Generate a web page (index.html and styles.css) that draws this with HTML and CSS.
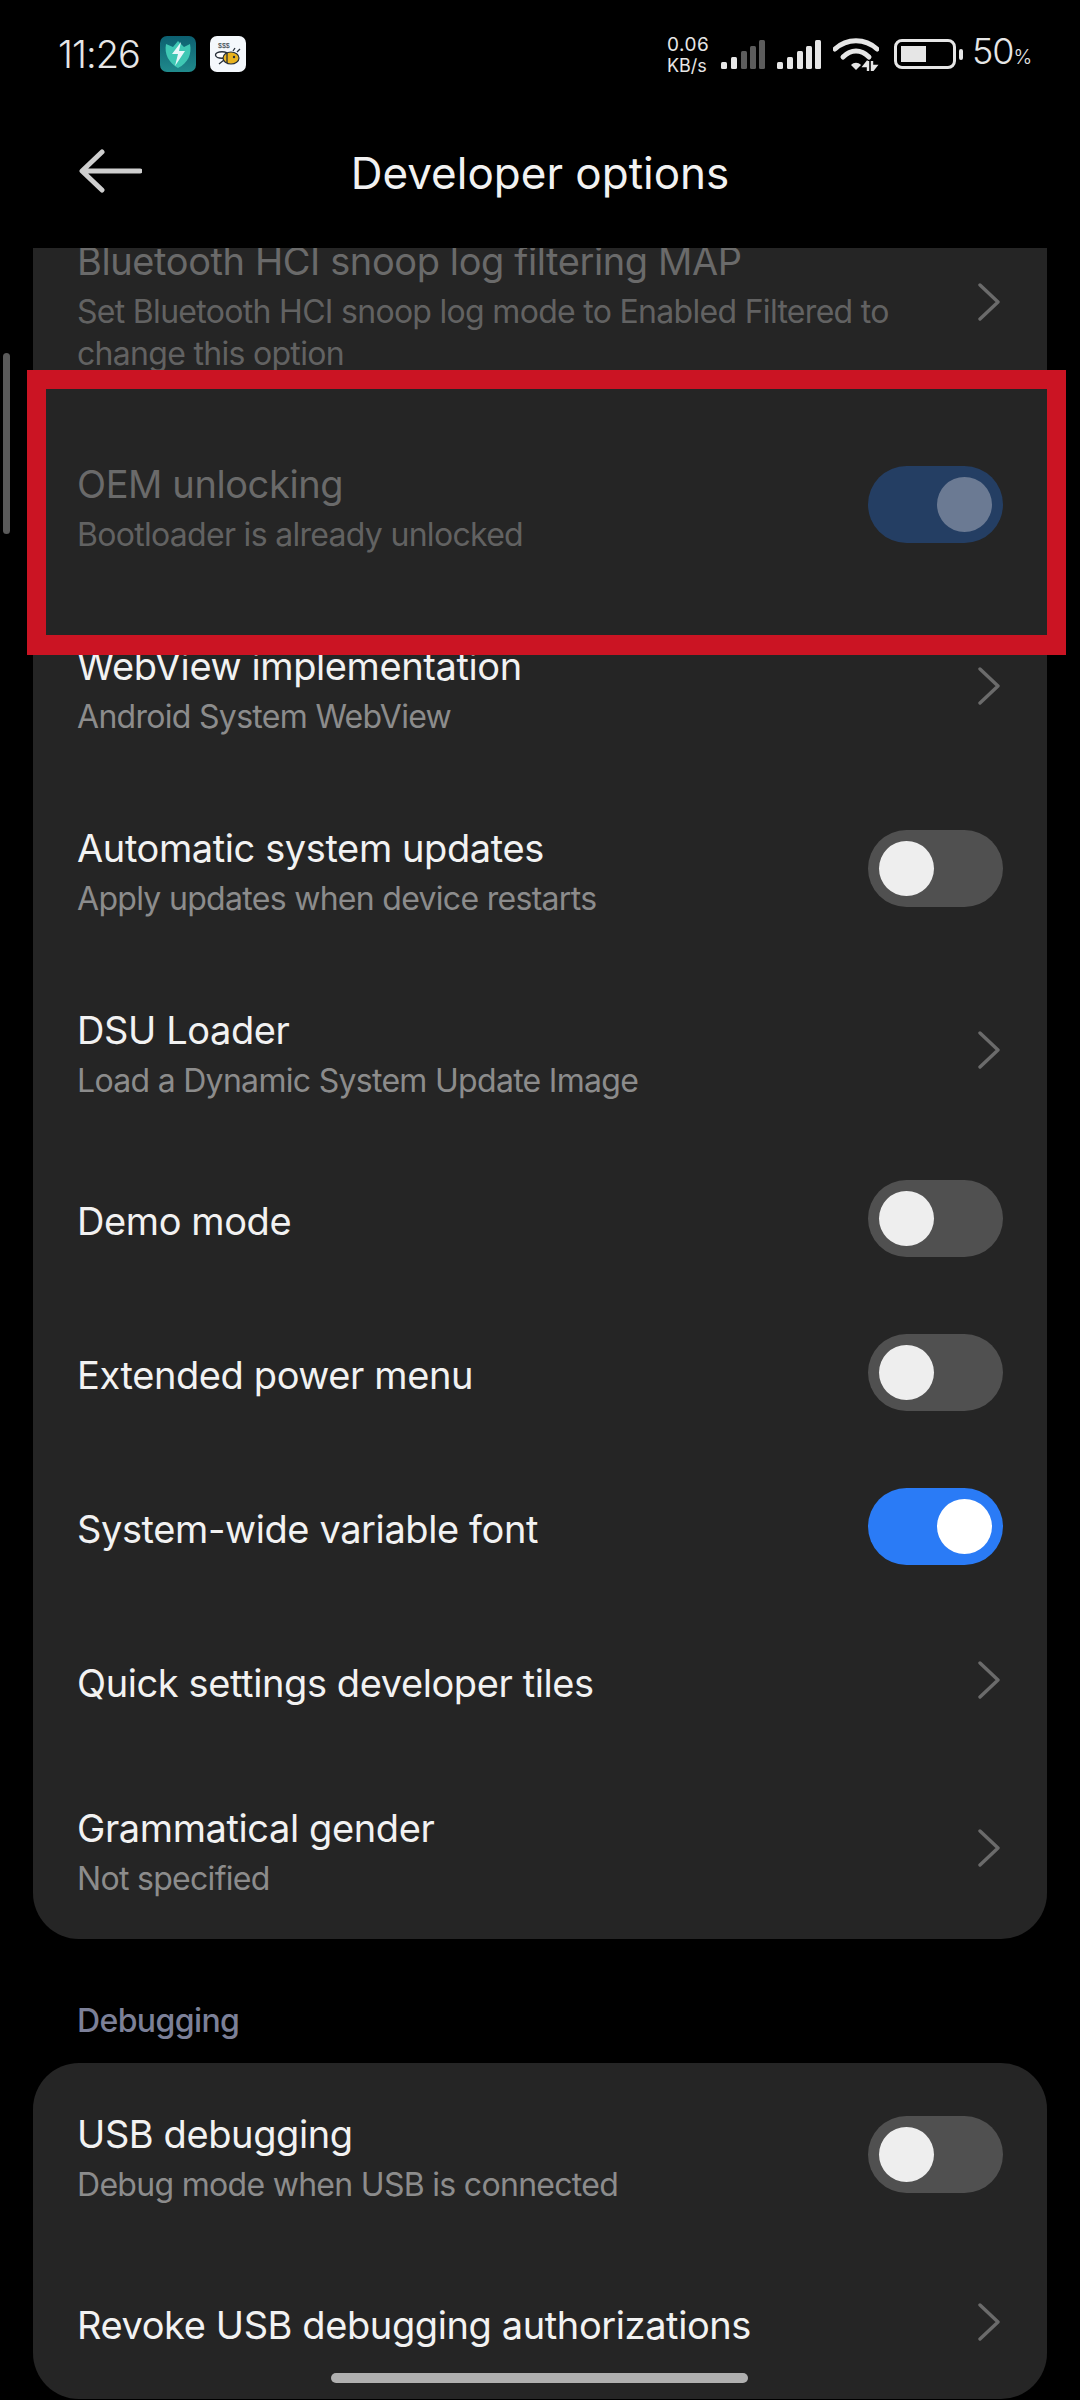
FILE: index.html
```html
<!DOCTYPE html>
<html lang="en">
<head>
    <meta charset="UTF-8">
    <title>Developer options</title>
    <link rel="stylesheet" href="styles.css">
</head>
<body>
    <div class="phone">
        <div class="status-bar">
            <div class="status-left">
                <span class="clock">11:26</span>
                <svg class="app-icon" viewBox="0 0 36 36" width="36" height="36">
                    <defs>
                        <linearGradient id="tealBg" x1="0" y1="0" x2="0" y2="1">
                            <stop offset="0" stop-color="#0c5f70"/>
                            <stop offset="1" stop-color="#208a8c"/>
                        </linearGradient>
                    </defs>
                    <rect width="36" height="36" rx="7" fill="url(#tealBg)"/>
                    <path d="M6 8 L13 11 L18 5 L24 11 L30 8 C32 18 28 27 18 32 C9 27 4 18 6 8 Z" fill="#3fc7b4"/>
                    <path d="M21 6 L12 18 L18 18 L15 30 L25 15 L19 15 Z" fill="#e8f7fa"/>
                </svg>
                <svg class="app-icon" viewBox="0 0 36 36" width="36" height="36">
                    <rect width="36" height="36" rx="7" fill="#f4f8fc"/>
                    <ellipse cx="12" cy="19" rx="6.5" ry="3.2" fill="#fff" stroke="#27303a" stroke-width="1.4"/>
                    <ellipse cx="21" cy="22" rx="8" ry="6" fill="#e9b31d" stroke="#27303a" stroke-width="1.2"/>
                    <circle cx="24" cy="21" r="1.2" fill="#27303a"/>
                    <path d="M17 17 L17 27 M9 28 L14 24 M23 15 L25 12 M27 16 L30 13" stroke="#27303a" stroke-width="1.3" fill="none"/>
                    <text x="8" y="12" class="bee-money">$$$</text>
                </svg>
            </div>
            <div class="status-right">
                <div class="net-speed"><span class="net-value">0.06</span><span>KB/s</span></div>
                <svg class="signal" viewBox="0 0 44 29" width="44" height="29">
                    <rect x="0" y="22" width="6" height="7" rx="1.5" fill="#e6e6e6"/>
                    <rect x="10" y="17" width="6" height="12" rx="1.5" fill="#e6e6e6"/>
                    <rect x="20" y="11" width="6" height="18" rx="1.5" fill="#5c5c5c"/>
                    <rect x="29" y="6" width="6" height="23" rx="1.5" fill="#5c5c5c"/>
                    <rect x="38" y="0" width="6" height="29" rx="1.5" fill="#5c5c5c"/>
                </svg>
                <svg class="signal" viewBox="0 0 44 29" width="44" height="29">
                    <rect x="0" y="22" width="6" height="7" rx="1.5" fill="#e6e6e6"/>
                    <rect x="10" y="17" width="6" height="12" rx="1.5" fill="#e6e6e6"/>
                    <rect x="20" y="11" width="6" height="18" rx="1.5" fill="#e6e6e6"/>
                    <rect x="29" y="6" width="6" height="23" rx="1.5" fill="#e6e6e6"/>
                    <rect x="38" y="0" width="6" height="29" rx="1.5" fill="#e6e6e6"/>
                </svg>
                <svg class="wifi" viewBox="0 0 46 34" width="46" height="34">
                    <path d="M2 12 C14 1 32 1 44 12" fill="none" stroke="#e6e6e6" stroke-width="5" stroke-linecap="round"/>
                    <path d="M10 20 C18 12 28 12 36 20" fill="none" stroke="#e6e6e6" stroke-width="5" stroke-linecap="round"/>
                    <path d="M18 28 L23 33 L28 28 C25 25 21 25 18 28 Z" fill="#e6e6e6"/>
                    <path d="M35 24 L35 34 M35 24 L31 29 L35 29 M39 34 L39 24 M39 34 L43 29 L39 29" fill="none" stroke="#e6e6e6" stroke-width="2.4"/>
                </svg>
                <div class="battery">
                    <div class="battery-body"><div class="battery-fill"></div></div>
                    <div class="battery-nub"></div>
                </div>
                <div class="battery-text">50<small>%</small></div>
            </div>
        </div>

        <header class="title-bar">
            <svg class="back" viewBox="0 0 64 44" width="64" height="44">
                <path d="M62 22 H5 M24 3 L4 22 L24 41" fill="none" stroke="#cfcfcf" stroke-width="5" stroke-linecap="round" stroke-linejoin="round"/>
            </svg>
            <h1>Developer options</h1>
        </header>

        <main class="scroller">
            <section class="card card-scrolled">
                <div class="row row-tall disabled">
                    <div class="row-text">
                        <div class="row-title">Bluetooth HCI snoop log filtering MAP</div>
                        <div class="row-sub">Set Bluetooth HCI snoop log mode to Enabled Filtered to change this option</div>
                    </div>
                    <svg class="chevron" viewBox="0 0 22 38" width="22" height="38"><path d="M2 2 L20 19 L2 36" fill="none" stroke="#6b6b6b" stroke-width="3.4" stroke-linecap="round" stroke-linejoin="round"/></svg>
                </div>
                <div class="row row-double disabled">
                    <div class="row-text">
                        <div class="row-title">OEM unlocking</div>
                        <div class="row-sub">Bootloader is already unlocked</div>
                    </div>
                    <div class="toggle toggle-on-dim"><span class="knob"></span></div>
                </div>
                <div class="row row-double">
                    <div class="row-text">
                        <div class="row-title">WebView implementation</div>
                        <div class="row-sub">Android System WebView</div>
                    </div>
                    <svg class="chevron" viewBox="0 0 22 38" width="22" height="38"><path d="M2 2 L20 19 L2 36" fill="none" stroke="#6b6b6b" stroke-width="3.4" stroke-linecap="round" stroke-linejoin="round"/></svg>
                </div>
                <div class="row row-double">
                    <div class="row-text">
                        <div class="row-title">Automatic system updates</div>
                        <div class="row-sub">Apply updates when device restarts</div>
                    </div>
                    <div class="toggle"><span class="knob"></span></div>
                </div>
                <div class="row row-double">
                    <div class="row-text">
                        <div class="row-title">DSU Loader</div>
                        <div class="row-sub">Load a Dynamic System Update Image</div>
                    </div>
                    <svg class="chevron" viewBox="0 0 22 38" width="22" height="38"><path d="M2 2 L20 19 L2 36" fill="none" stroke="#6b6b6b" stroke-width="3.4" stroke-linecap="round" stroke-linejoin="round"/></svg>
                </div>
                <div class="row">
                    <div class="row-text"><div class="row-title">Demo mode</div></div>
                    <div class="toggle"><span class="knob"></span></div>
                </div>
                <div class="row">
                    <div class="row-text"><div class="row-title">Extended power menu</div></div>
                    <div class="toggle"><span class="knob"></span></div>
                </div>
                <div class="row">
                    <div class="row-text"><div class="row-title">System-wide variable font</div></div>
                    <div class="toggle toggle-on"><span class="knob"></span></div>
                </div>
                <div class="row">
                    <div class="row-text"><div class="row-title">Quick settings developer tiles</div></div>
                    <svg class="chevron" viewBox="0 0 22 38" width="22" height="38"><path d="M2 2 L20 19 L2 36" fill="none" stroke="#6b6b6b" stroke-width="3.4" stroke-linecap="round" stroke-linejoin="round"/></svg>
                </div>
                <div class="row row-double">
                    <div class="row-text">
                        <div class="row-title">Grammatical gender</div>
                        <div class="row-sub">Not specified</div>
                    </div>
                    <svg class="chevron" viewBox="0 0 22 38" width="22" height="38"><path d="M2 2 L20 19 L2 36" fill="none" stroke="#6b6b6b" stroke-width="3.4" stroke-linecap="round" stroke-linejoin="round"/></svg>
                </div>
            </section>

            <h2 class="section-label">Debugging</h2>

            <section class="card">
                <div class="row row-double">
                    <div class="row-text">
                        <div class="row-title">USB debugging</div>
                        <div class="row-sub">Debug mode when USB is connected</div>
                    </div>
                    <div class="toggle"><span class="knob"></span></div>
                </div>
                <div class="row">
                    <div class="row-text"><div class="row-title">Revoke USB debugging authorizations</div></div>
                    <svg class="chevron" viewBox="0 0 22 38" width="22" height="38"><path d="M2 2 L20 19 L2 36" fill="none" stroke="#6b6b6b" stroke-width="3.4" stroke-linecap="round" stroke-linejoin="round"/></svg>
                </div>
            </section>
        </main>

        <div class="scroll-thumb"></div>
        <div class="highlight-frame"></div>
        <div class="home-bar"></div>
    </div>
</body>
</html>
```

FILE: styles.css
```css
* {
    margin: 0;
    padding: 0;
    box-sizing: border-box;
}

body {
    background-color: #000;
    font-family: Inter, Roboto, sans-serif;
    color: #f2f2f2;
}

.phone {
    position: relative;
    width: 1080px;
    height: 2400px;
    overflow: hidden;
    background-color: #000;
    display: flex;
    flex-direction: column;
}

/* status bar */
.status-bar {
    height: 108px;
    padding: 36px 51px 0 58px;
    display: flex;
    justify-content: space-between;
    align-items: flex-start;
    flex-shrink: 0;
}

.status-left {
    display: flex;
    align-items: center;
    gap: 14px;
    height: 36px;
}

.clock {
    font-size: 38px;
    font-weight: 300;
    letter-spacing: -1px;
    color: #e6e6e6;
    width: 88px;
    white-space: nowrap;
}

.app-icon {
    display: block;
}

.bee-money {
    font-family: "Liberation Sans", sans-serif;
    font-size: 7px;
    fill: #27303a;
}

.status-right {
    display: flex;
    align-items: flex-end;
    height: 36px;
    gap: 12px;
    color: #e6e6e6;
}

.net-speed {
    display: flex;
    flex-direction: column;
    font-size: 18px;
    line-height: 21px;
    width: 44px;
    margin-bottom: -4px;
    margin-right: -2px;
    white-space: nowrap;
}

.net-value {
    font-size: 19px;
    letter-spacing: 0.5px;
}

.signal {
    display: block;
    margin-bottom: 3px;
}

.wifi {
    display: block;
    margin-bottom: 1px;
    margin-right: 3px;
}

.battery {
    display: flex;
    align-items: center;
    gap: 3px;
    margin-bottom: 3px;
    margin-right: -3px;
}

.battery-body {
    width: 62px;
    height: 30px;
    border: 3px solid #e6e6e6;
    border-radius: 8px;
    padding: 4px;
}

.battery-fill {
    width: 25px;
    height: 100%;
    background-color: #e6e6e6;
}

.battery-nub {
    width: 4px;
    height: 11px;
    border-radius: 2px;
    background-color: #e6e6e6;
}

.battery-text {
    font-size: 36px;
    font-weight: 300;
    line-height: 36px;
    letter-spacing: -1px;
    margin-bottom: -3px;
    width: 57px;
    white-space: nowrap;
}

.battery-text small {
    font-size: 20px;
    letter-spacing: 0;
}

/* title */
.title-bar {
    position: relative;
    height: 140px;
    flex-shrink: 0;
    display: flex;
    align-items: center;
    justify-content: center;
}

.title-bar h1 {
    font-size: 44px;
    font-weight: 400;
    letter-spacing: 0;
    color: #f2f2f2;
    margin-bottom: 10px;
}

.back {
    position: absolute;
    left: 78px;
    top: 41px;
}

/* list */
.scroller {
    flex: 1;
    overflow: hidden;
    padding: 0 33px;
}

.card {
    background-color: #252525;
    border-radius: 46px;
}

.card-scrolled {
    margin-top: -57px;
}

.row {
    height: 154px;
    padding: 0 44px 0 44px;
    display: flex;
    align-items: center;
    justify-content: space-between;
}

.row-double {
    height: 182px;
}

.row-tall {
    height: 222px;
}

.row-text {
    width: 830px;
    padding-top: 6px;
}

.row-title {
    font-size: 38px;
    line-height: 50px;
    letter-spacing: -0.4px;
    color: #f2f2f2;
}

.row-sub {
    font-size: 32px;
    line-height: 42px;
    letter-spacing: -0.7px;
    color: #8c8c8c;
    margin-top: 5px;
}

.disabled .row-title {
    color: #6a6a6a;
}

.disabled .row-sub {
    color: #626262;
}

.chevron {
    display: block;
    margin-right: 3px;
}

.toggle {
    width: 135px;
    height: 77px;
    border-radius: 39px;
    background-color: #505050;
    padding: 11px;
    display: flex;
    flex-shrink: 0;
}

.knob {
    display: block;
    width: 55px;
    height: 55px;
    border-radius: 50%;
    background-color: #eeeeee;
}

.toggle-on {
    background-color: #2a7bf6;
    justify-content: flex-end;
}

.toggle-on .knob {
    background-color: #fff;
}

.toggle-on-dim {
    background-color: #243e63;
    justify-content: flex-end;
}

.toggle-on-dim .knob {
    background-color: #6b7a93;
}

.section-label {
    font-size: 32px;
    font-weight: 500;
    letter-spacing: -0.6px;
    color: #7c8098;
    padding: 62px 44px 22px;
    line-height: 40px;
}

/* overlays */
.scroll-thumb {
    position: absolute;
    left: 3px;
    top: 353px;
    width: 7px;
    height: 181px;
    border-radius: 4px;
    background-color: #5a5a5a;
}

.highlight-frame {
    position: absolute;
    left: 27px;
    top: 370px;
    width: 1039px;
    height: 285px;
    border: 19px solid #cb1423;
    border-bottom-width: 20px;
}

.home-bar {
    position: absolute;
    left: 331px;
    top: 2373px;
    width: 417px;
    height: 10px;
    border-radius: 5px;
    background-color: #b0b0b0;
}
```
